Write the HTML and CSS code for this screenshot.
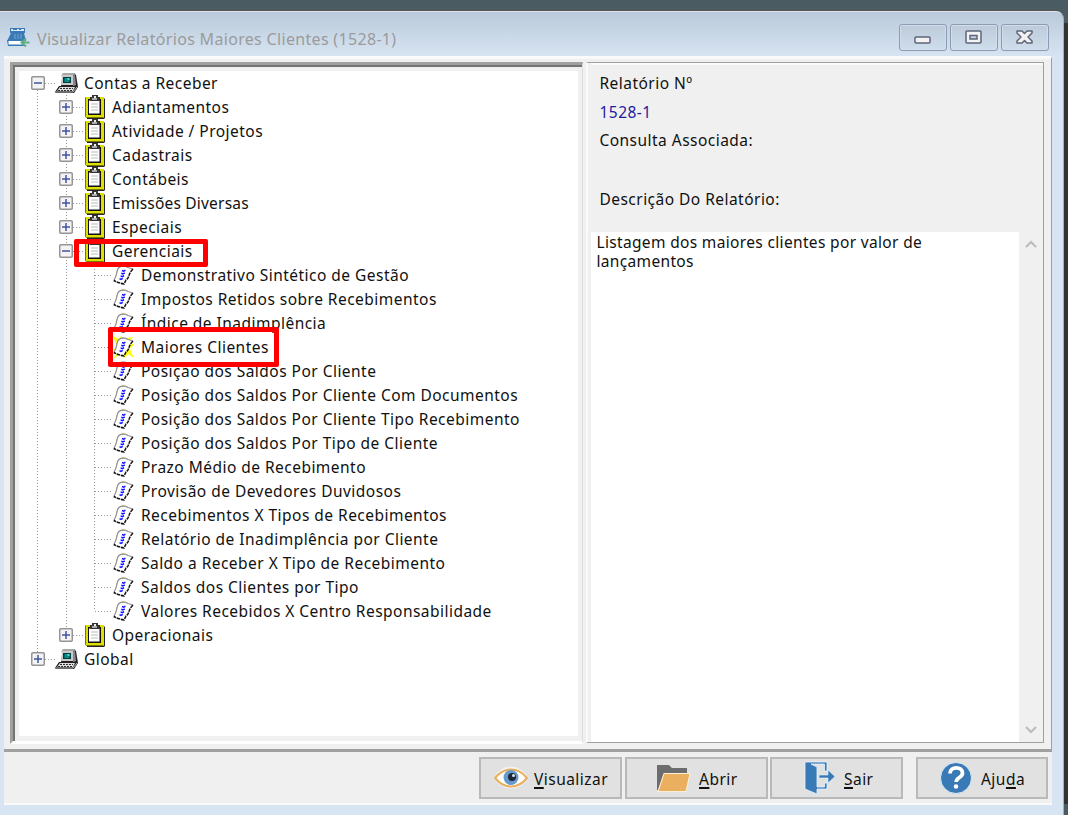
FILE: index.html
```html
<!DOCTYPE html>
<html lang="pt-BR">
<head>
<meta charset="utf-8">
<title>Visualizar Relatórios</title>
<link rel="stylesheet" href="styles.css">
</head>
<body>
<svg class="defs" width="0" height="0">
  <symbol id="plus" viewBox="0 0 14 14"><rect x=".75" y=".75" width="12.5" height="12.5" rx="1" fill="#f4f4f4" stroke="#959595" stroke-width="1.5"/><path d="M3 7h8M7 3v8" stroke="#4054a0" stroke-width="1.5"/></symbol>
  <symbol id="minus" viewBox="0 0 14 14"><rect x=".75" y=".75" width="12.5" height="12.5" rx="1" fill="#f4f4f4" stroke="#959595" stroke-width="1.5"/><path d="M3 7h8" stroke="#4054a0" stroke-width="1.5"/></symbol>
  <symbol id="pc" viewBox="0 0 24 22"><path d="M8 1h11l2 2 2 12-4 6H1l-1-1 4-6h2z" fill="#222"/><path d="M8 1h11l1 2-3 1H6z" fill="#a8a8a8"/><path d="M7 3h11v10H6z" fill="#cacaca"/><path d="M18 4l2-1 1 10-3 1z" fill="#898989"/><path d="M8 5h8v6H8z" fill="#063c3c"/><path d="M9.500 6h5v4h-5z" fill="#078c8c"/><path d="M12.500 6h2v2h-2z" fill="#42e0dc"/><path d="M5 15h15l-2 4H2z" fill="#ddd"/><path d="M5 16.500h13M3 18.500h14" stroke="#333" stroke-dasharray="2 1"/><path d="M1 20h17l4-5" fill="none" stroke="#bbb"/></symbol>
  <symbol id="clip" viewBox="0 0 21 24"><path d="M1 2h17l2 2v19l-1 1H2z" fill="#222"/><path d="M0 2h19v21H1l-1-1z" fill="#dede00"/><path d="M.5 2.500v19l1 1h17" fill="none" stroke="#77770a"/><path d="M3 4h13v16H3z" fill="#111"/><path d="M4 5.500h10.500v13H4z" fill="#fff"/><path d="M6 9h7M6 12h7M6 15h7" stroke="#bbb"/><path d="M5 2h2V0h6v2h2v4H5z" fill="#333"/><path d="M7 3h5v2H7z" fill="#aaa"/><path d="M9 1h2v2H9z" fill="#eee"/></symbol>
  <symbol id="sheet" viewBox="0 0 21 20"><path d="M5 3.500Q7 1 10 1t5 1.500l5 1.500q-3 3-4 6.500T13 15l-2 4Q5 18 .800 15.500 3 12 3.500 9T5 3.500z" fill="#fff"/><path d="M.8 15.500Q3 12 3.500 9T5 3.500Q7 1 10 1t5 1.500l5 1.500" fill="none" stroke="#929292" stroke-width="1.300"/><path d="M20 4q-3 3-4 6.500T13 15l-2 4Q5 18 .8 15.500" fill="none" stroke="#111" stroke-width="1.500" stroke-dasharray="3.500 .8"/><path d="M9 5.500l1.500.7 2-.9M8.300 8.200l1.500.7 2-.9M7.600 10.900l1.500.7 2-.9M6.500 13.600l1.500.7 1.800-.9" fill="none" stroke="#1616ff" stroke-width="1.500"/></symbol>
  <symbol id="burst" viewBox="0 0 21 22"><path d="M0 0l6 3 2-3 3 3 9-2-3 5 4 3-4 3 1 4 3 6-6-4-3 4-4-4-8 5 4-6-4-3 4-3z" fill="#ffff00"/></symbol>
</svg>
<div class="window">
  <header class="titlebar">
    <svg class="app" viewBox="0 0 23 21"><path d="M3 1h15v5H3z" fill="#3979b5"/><path d="M4 2h13v2H4z" fill="#dcecf7"/><path d="M6 2h4v1H6zm6 0h2v1h-2z" fill="#3979b5"/><path d="M4 6h13l2 8H0z" fill="#3979b5"/><path d="M8 7v5M11 7v5M14 7v5" stroke="#78a9d2"/><path d="M0 13h17v6H1z" fill="#3979b5"/><path d="M1.500 14h14v3.500h-14z" fill="#fff"/><path d="M22.500 15.500H15m4-4l-4.500 4 4.500 4" fill="none" stroke="#5cae83" stroke-width="2"/></svg>
    <h1>Visualizar Relatórios Maiores Clientes (1528-1)</h1>
    <div class="controls">
      <span><svg viewBox="0 0 46 25"><rect x="15" y="12" width="15" height="6" rx="1" fill="#f2f2f2" stroke="#60647a" stroke-width="1.500"/></svg></span>
      <span><svg viewBox="0 0 46 25"><rect x="15" y="6" width="15" height="12" rx="1" fill="#f2f2f2" stroke="#60647a" stroke-width="1.500"/><rect x="19" y="10.500" width="7" height="3.500" fill="#c4d2e2" stroke="#60647a" stroke-width="1.500"/></svg></span>
      <span><svg viewBox="0 0 46 25"><path d="M15 6h5l2.500 2.500L25 6h5v2l-4 4 4 4v2h-5l-2.500-2.500L20 18h-5v-2l4-4-4-4z" fill="#f2f2f2" stroke="#60647a" stroke-width="1.500" stroke-linejoin="round"/></svg></span>
    </div>
  </header>
  <main class="workspace">
    <section class="tree-frame">
      <ul class="tree">
        <li><div class="row"><svg class="box"><use href="#minus"/></svg><i></i><svg class="pc"><use href="#pc"/></svg><span>Contas a Receber</span></div>
          <ul class="folders">
            <li><div class="row"><svg class="box"><use href="#plus"/></svg><i></i><svg class="clip"><use href="#clip"/></svg><span>Adiantamentos</span></div></li>
            <li><div class="row"><svg class="box"><use href="#plus"/></svg><i></i><svg class="clip"><use href="#clip"/></svg><span>Atividade / Projetos</span></div></li>
            <li><div class="row"><svg class="box"><use href="#plus"/></svg><i></i><svg class="clip"><use href="#clip"/></svg><span>Cadastrais</span></div></li>
            <li><div class="row"><svg class="box"><use href="#plus"/></svg><i></i><svg class="clip"><use href="#clip"/></svg><span>Contábeis</span></div></li>
            <li><div class="row tight"><svg class="box"><use href="#plus"/></svg><i></i><svg class="clip"><use href="#clip"/></svg><span>Emissões Diversas</span></div></li>
            <li><div class="row"><svg class="box"><use href="#plus"/></svg><i></i><svg class="clip"><use href="#clip"/></svg><span>Especiais</span></div></li>
            <li><div class="row"><svg class="box"><use href="#minus"/></svg><i></i><svg class="clip"><use href="#clip"/></svg><span>Gerenciais</span></div>
              <ul class="reports">
                <li class="row"><i></i><svg class="sheet"><use href="#sheet"/></svg><span>Demonstrativo Sintético de Gestão</span></li>
                <li class="row"><i></i><svg class="sheet"><use href="#sheet"/></svg><span>Impostos Retidos sobre Recebimentos</span></li>
                <li class="row"><i></i><svg class="sheet"><use href="#sheet"/></svg><span>Índice de Inadimplência</span></li>
                <li class="row selected"><i></i><svg class="sheet"><use href="#burst"/><use href="#sheet"/></svg><span>Maiores Clientes</span></li>
                <li class="row"><i></i><svg class="sheet"><use href="#sheet"/></svg><span>Posição dos Saldos Por Cliente</span></li>
                <li class="row"><i></i><svg class="sheet"><use href="#sheet"/></svg><span>Posição dos Saldos Por Cliente Com Documentos</span></li>
                <li class="row"><i></i><svg class="sheet"><use href="#sheet"/></svg><span>Posição dos Saldos Por Cliente Tipo Recebimento</span></li>
                <li class="row"><i></i><svg class="sheet"><use href="#sheet"/></svg><span>Posição dos Saldos Por Tipo de Cliente</span></li>
                <li class="row"><i></i><svg class="sheet"><use href="#sheet"/></svg><span>Prazo Médio de Recebimento</span></li>
                <li class="row"><i></i><svg class="sheet"><use href="#sheet"/></svg><span>Provisão de Devedores Duvidosos</span></li>
                <li class="row"><i></i><svg class="sheet"><use href="#sheet"/></svg><span>Recebimentos X Tipos de Recebimentos</span></li>
                <li class="row"><i></i><svg class="sheet"><use href="#sheet"/></svg><span>Relatório de Inadimplência por Cliente</span></li>
                <li class="row"><i></i><svg class="sheet"><use href="#sheet"/></svg><span>Saldo a Receber X Tipo de Recebimento</span></li>
                <li class="row"><i></i><svg class="sheet"><use href="#sheet"/></svg><span>Saldos dos Clientes por Tipo</span></li>
                <li class="row"><i></i><svg class="sheet"><use href="#sheet"/></svg><span>Valores Recebidos X Centro Responsabilidade</span></li>
              </ul>
            </li>
            <li><div class="row"><svg class="box"><use href="#plus"/></svg><i></i><svg class="clip"><use href="#clip"/></svg><span>Operacionais</span></div></li>
          </ul>
        </li>
        <li><div class="row"><svg class="box"><use href="#plus"/></svg><i></i><svg class="pc"><use href="#pc"/></svg><span>Global</span></div></li>
      </ul>
    </section>
    <section class="details">
      <div class="fields">
        <p>Relatório Nº</p>
        <p class="number">1528-1</p>
        <p>Consulta Associada:</p>
        <p class="last">Descrição Do Relatório:</p>
      </div>
      <div class="description">
        <p>Listagem dos maiores clientes por valor de lançamentos</p>
        <div class="scroll">
          <svg viewBox="0 0 12 9"><path d="M1 7l5-5 5 5" fill="none" stroke="#bcbcbc" stroke-width="2.200"/></svg>
          <svg viewBox="0 0 12 9"><path d="M1 2l5 5 5-5" fill="none" stroke="#bcbcbc" stroke-width="2.200"/></svg>
        </div>
      </div>
    </section>
  </main>
  <footer class="actions">
    <button class="view"><svg width="36" height="24" viewBox="0 0 36 24"><path d="M2 12Q9 2 18 2t16 10Q27 21 18 21T2 12z" fill="#fff" stroke="#f3f3f3" stroke-width="3"/><path d="M2 12Q9 3.500 18 3.500T34 12Q27 20.500 18 20.500T2 12z" fill="#fff" stroke="#e9ae5c" stroke-width="2"/><circle cx="18" cy="11.500" r="7.500" fill="#6699cc"/><circle cx="19" cy="11" r="4" fill="#1d2735"/><circle cx="20.500" cy="9.500" r="1.500" fill="#dce9f5"/></svg><span><u>V</u>isualizar</span></button>
    <button class="open"><svg width="35" height="29" viewBox="0 0 35 29"><path d="M1 1h12l3 3h15v5H8L2 26H1z" fill="#6c6c6c"/><path d="M8 9.500h26l-4 18H2z" fill="#ebb05f" stroke="#fff0d7"/></svg><span><u>A</u>brir</span></button>
    <button class="exit"><svg width="31" height="34" viewBox="0 0 31 34"><path d="M1 1h22v9h-2.500V3H7l6 3v20h7.500v-4H23v6H13v5L1 28z" fill="#3979b5" stroke="#e4f4ff" stroke-width=".8"/><path d="M15 14h9V9l7 6.500-7 6.500v-5h-9z" fill="#3979b5" stroke="#e4f4ff" stroke-width=".6"/></svg><span><u>S</u>air</span></button>
    <button class="help"><svg width="32" height="32" viewBox="0 0 32 32"><circle cx="16" cy="16" r="15.500" fill="#3979b5" stroke="#d5e9f7"/><path d="M10 11.500c0-7.500 12.500-7.500 12.500-.5 0 5-6.300 4-6.300 9" fill="none" stroke="#fff" stroke-width="3.800"/><circle cx="16" cy="24.500" r="2.200" fill="#fff"/></svg><span>Aju<u>d</u>a</span></button>
  </footer>
  <div class="mark mark-group"></div>
  <div class="mark mark-report"></div>
</div>
</body>
</html>
```
FILE: styles.css
```css
* { box-sizing: border-box; }
body { margin: 0; width: 1068px; height: 815px; overflow: hidden; padding-top: 11px; background: linear-gradient(#333, #333) 100% 23px / 10px 781px no-repeat, #4a5b62; font: 15.5px/24px "Noto Sans", "Open Sans", sans-serif; letter-spacing: .47px; color: #111; }
.defs { display: block; width: 0; height: 0; }
ul, p, h1 { margin: 0; padding: 0; font-weight: normal; list-style: none; }
svg { display: block; flex: none; }
.window { position: relative; width: 1064px; height: 804px; padding: 0 12px 0 4px; border-top: 1px solid #dce3e9; border-right: 1px solid #a8afb5; border-radius: 0 8px 0 0; background: linear-gradient(#bacada, #d7e4f2 45px, #d7e4f2); box-shadow: 0 -1px 0 #555; }
.titlebar { height: 44px; display: flex; align-items: center; padding: 10px 2px 0 3px; }
.app { width: 23px; height: 21px; margin-top: -3px; }
.titlebar h1 { flex: 1; margin-left: 7px; font-size: 16px; letter-spacing: .32px; color: #9b9b9b; white-space: nowrap; }
.controls { display: flex; gap: 3px; margin-top: -3px; }
.controls span { width: 48px; height: 27px; border: 1px solid #8c9ab4; border-radius: 3px; box-shadow: inset 0 0 0 1px #d3deea; background: linear-gradient(#bccada, #cfdeed); }
.controls svg { width: 46px; height: 25px; }
.workspace { width: 1048px; height: 696px; padding: 6px 7px 9px 6px; display: flex; background: #f0f0f0; border-top: 3px solid #fafafa; border-right: 1px solid #a0a0a0; border-bottom: 3px solid #a0a0a0; }
.tree-frame { width: 574px; height: 682px; margin-top: -3px; padding: 6px 4px 5px 6px; background: #f0f0f0; border-top: 3px solid #a0a0a0; border-left: 3px solid #a0a0a0; border-right: 1px solid #dedede; border-bottom: 3px solid #fff; box-shadow: inset 2px 2px 0 #747474; }
.tree { height: 665px; background: repeating-linear-gradient(#999 0 1px, transparent 1px 3px) 18px 19px / 1px 565px no-repeat, #fff; }
.row { height: 24px; display: flex; align-items: center; white-space: nowrap; padding-left: 12px; }
.row i { width: 12px; height: 1px; background: repeating-linear-gradient(90deg, #999 0 1px, transparent 1px 3px); }
.tight span { letter-spacing: .2px; }
.box { width: 14px; height: 14px; }
.pc { width: 24px; height: 22px; margin-left: -2px; }
.pc + span { margin-left: 5px; }
.folders { background: repeating-linear-gradient(#999 0 1px, transparent 1px 3px) 47px 0 / 1px calc(100% - 12px) no-repeat; }
.folders .row { padding-left: 40px; }
.clip { width: 21px; height: 24px; }
.clip + span { margin-left: 6px; }
.reports { background: repeating-linear-gradient(#999 0 1px, transparent 1px 3px) 75px 0 / 1px calc(100% - 12px) no-repeat; }
.folders .reports .row { padding-left: 76px; }
.reports i { width: 18px; }
.sheet { width: 21px; height: 20px; }
.selected .sheet { height: 22px; }
.sheet + span { margin-left: 7px; }
.details { width: 458px; height: 681px; margin: -3px 0 0 3px; padding-left: 3px; border-top: 1px solid #a0a0a0; border-right: 1px solid #a0a0a0; border-bottom: 1px solid #a0a0a0; border-left: 2px solid #fafafa; }
.fields { height: 169px; padding: 8px 0 0 8px; box-shadow: inset 0 2px 0 #fafafa; }
.fields p { height: 28.500px; }
.fields .number { color: #221b9e; }
.fields .last { padding-top: 30px; }
.description { height: 510px; display: flex; background: #fff; }
.description p { flex: 1; padding: 1px 70px 0 5px; line-height: 19px; letter-spacing: .34px; }
.scroll { width: 24px; padding: 8px 1px 8px 0; display: flex; flex-direction: column; align-items: center; justify-content: space-between; background: #f0f0f0; }
.scroll svg { width: 12px; height: 9px; }
.actions { width: 1048px; height: 53px; display: flex; align-items: flex-start; padding: 5px 4px 0 475px; background: #f0f0f0; border-bottom: 2px solid #fafafa; }
.actions button { height: 42px; display: flex; align-items: center; padding: 0; border: 2px solid #b9b9b9; background: #e1e1e1; font: inherit; letter-spacing: inherit; color: #111; }
.actions u { text-decoration-thickness: 1.500px; text-underline-offset: 2px; }
.actions span { margin-top: 1px; }
.view { width: 143px; }
.view svg { margin-left: 12px; }
.view span { margin-left: 5px; }
.open { width: 143px; margin-left: 3px; }
.open svg { margin-left: 29px; }
.open span { margin-left: 8px; }
.exit { width: 133px; margin-left: 2px; }
.exit svg { margin-left: 32px; }
.exit span { margin-left: 9px; }
.help { width: 132px; margin-left: 13px; }
.help svg { margin-left: 22px; }
.help span { margin-left: 9px; }
.mark { position: absolute; border: 5px solid #fe0000; border-radius: 2px; }
.mark-group { left: 74px; top: 227px; width: 134px; height: 28px; }
.mark-report { left: 108px; top: 315px; width: 171px; height: 40px; }
```
